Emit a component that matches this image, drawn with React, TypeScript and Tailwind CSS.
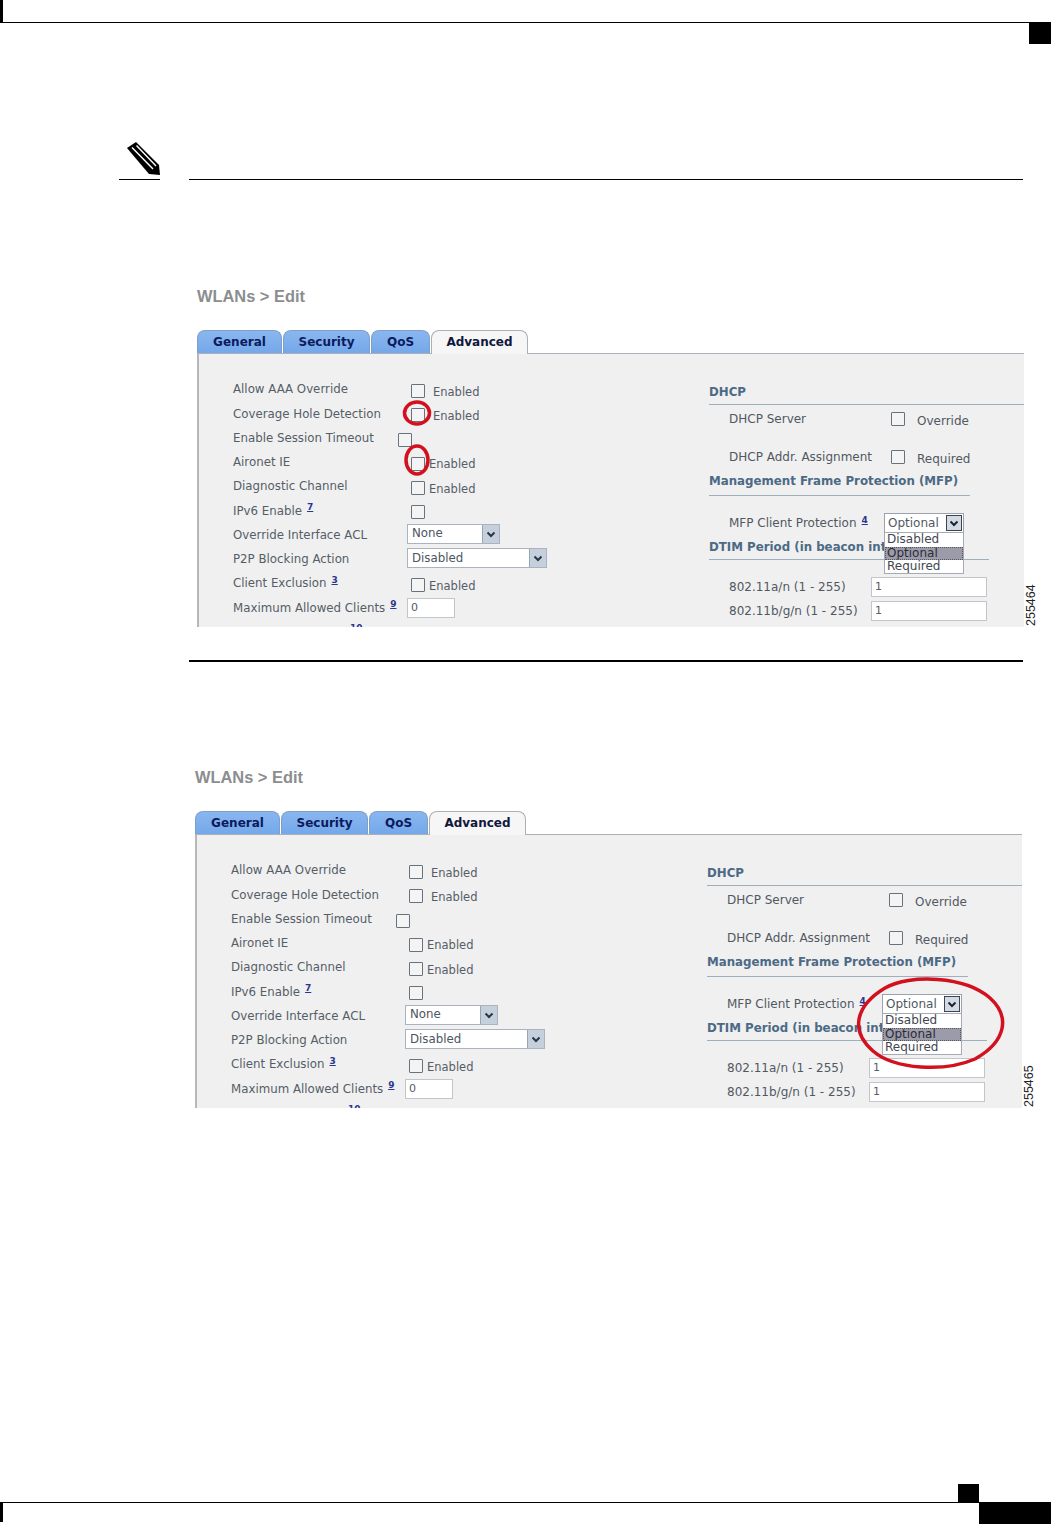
import React from "react";

const Checkbox = () => (
  <span className="block w-[14px] h-[14px] shrink-0 border border-[#66727e] bg-[#f4f4f4] rounded-[1px]" />
);

const Sup = ({ n }: { n: string }) => (
  <sup className="ml-[5px] text-[9px] font-bold underline text-[#2a3690]">{n}</sup>
);

const Select = ({ value, w }: { value: string; w: string }) => (
  <div className={`${w} h-[20px] mt-[-3px] flex items-center justify-between bg-white border border-[#aab3bf] pl-[4px] text-[#4d5560]`}>
    {value}
    <span className="w-[17px] h-[18px] flex items-center justify-center bg-[#c6cfdc] border-l border-[#9aa6b6]">
      <svg width="10" height="7" viewBox="0 0 10 7">
        <path d="M1.5 1.5 L5 5 L8.5 1.5" fill="none" stroke="#27364a" strokeWidth="2" />
      </svg>
    </span>
  </div>
);

const TextBox = ({ value, w }: { value: string; w: string }) => (
  <div className={`${w} h-[20px] flex items-center bg-white border border-[#c2c6ca] pl-[3px] text-[#555c64] text-[11px]`}>
    {value}
  </div>
);

const LeftRow = ({ label, children }: { label: React.ReactNode; children?: React.ReactNode }) => (
  <div className="h-[24.25px] flex items-center shrink-0">
    <div className="w-[174px] shrink-0 text-[#555d67]">{label}</div>
    {children}
  </div>
);

// checkbox plus the small label next to it
const Check = ({ text, gap = "ml-[8px]", pad = "ml-[4px]" }: { text?: string; gap?: string; pad?: string }) => (
  <div className={`flex items-center ${pad}`}>
    <div className="mb-[-2px]">
      <Checkbox />
    </div>
    {text && <span className={`${gap} mt-[4px] text-[11.5px] text-[#555d67]`}>{text}</span>}
  </div>
);

const Heading = ({ children, className }: { children: React.ReactNode; className: string }) => (
  <div className={`flex items-end border-b border-[#9fb0bd] font-bold text-[11.8px] text-[#4c6a85] whitespace-nowrap ${className}`}>
    {children}
  </div>
);

const Tab = ({ label, w }: { label: string; w: string }) => (
  <div className={`${w} h-[23px] mr-[1px] flex items-center justify-center rounded-t-[8px] bg-gradient-to-b from-[#8ab6ef] to-[#74a8ea] border-t border-x border-[#7d9fca] font-bold text-[12px] text-[#0b1b5e]`}>
    {label}
  </div>
);

const Panel = ({ figure, kind }: { figure: string; kind: "boxes" | "menu" }) => (
  <div className="relative w-[827px] h-[342px] font-['DejaVu_Sans',sans-serif] text-[11.8px]">
    <div className="h-[45px] pt-[1px] font-['Liberation_Sans',sans-serif] font-bold text-[16.4px] text-[#8b8d8f] leading-[20px]">
      WLANs &gt; Edit
    </div>
    <div className="flex h-[23px]">
      <Tab label="General" w="w-[85px]" />
      <Tab label="Security" w="w-[87px]" />
      <Tab label="QoS" w="w-[59px]" />
      <div className="w-[97px] h-[24px] pb-[1px] relative z-10 flex items-center justify-center rounded-t-[8px] bg-[#f6f6f6] border-t border-x border-[#a9b0b8] font-bold text-[12px] text-[#10183c]">
        Advanced
      </div>
    </div>
    <div className="h-[274px] flex overflow-hidden bg-[#f0f0f0] border-t border-[#a9b0b8] border-l-2 border-l-[#b5b7ba]">
      <div className="w-[510px] shrink-0 pl-[34px] pt-[24px] flex flex-col">
        <LeftRow label="Allow AAA Override"><Check text="Enabled" /></LeftRow>
        <LeftRow label="Coverage Hole Detection"><Check text="Enabled" /></LeftRow>
        <LeftRow label="Enable Session Timeout"><Check pad="ml-[-9px]" /></LeftRow>
        <LeftRow label="Aironet IE"><Check text="Enabled" gap="ml-[4px]" /></LeftRow>
        <LeftRow label="Diagnostic Channel"><Check text="Enabled" gap="ml-[4px]" /></LeftRow>
        <LeftRow label={<>IPv6 Enable<Sup n="7" /></>}><Check /></LeftRow>
        <LeftRow label="Override Interface ACL"><Select value="None" w="w-[93px]" /></LeftRow>
        <LeftRow label="P2P Blocking Action"><Select value="Disabled" w="w-[140px]" /></LeftRow>
        <LeftRow label={<>Client Exclusion<Sup n="3" /></>}><Check text="Enabled" gap="ml-[4px]" /></LeftRow>
        <LeftRow label={<>Maximum Allowed Clients<Sup n="9" /></>}><TextBox value="0" w="w-[48px]" /></LeftRow>
        <LeftRow label={<span className="block pl-[112px]"><Sup n="10" /></span>}><Check /></LeftRow>
      </div>
      <div className="flex-1 flex flex-col text-[12px] text-[#505862]">
        <Heading className="mt-[26px] h-[25px] pb-[2px]">DHCP</Heading>
        <div className="h-[28px] flex items-center shrink-0 pl-[20px]">
          <span className="w-[162px]">DHCP Server</span>
          <Checkbox />
          <span className="ml-[12px] mt-[4px]">Override</span>
        </div>
        <div className="mt-[10px] h-[28px] flex items-center shrink-0 pl-[20px]">
          <span className="w-[162px]">DHCP Addr. Assignment</span>
          <Checkbox />
          <span className="ml-[12px] mt-[4px]">Required</span>
        </div>
        <Heading className="h-[25px] w-[261px] pb-[4px]">Management Frame Protection (MFP)</Heading>
        <div className="mt-[17px] h-[20px] flex items-center shrink-0 pl-[20px]">
          <span className="w-[155px]">MFP Client Protection<Sup n="4" /></span>
          <div className="w-[80px] h-[20px] flex items-center justify-between bg-white border border-[#9aa3ad] pl-[3px]">
            Optional
            <span className="w-[16px] h-[16px] mr-[1px] flex items-center justify-center bg-[#d3dae4] border border-[#3a4452]">
              <svg width="10" height="7" viewBox="0 0 10 7">
                <path d="M1.5 1.5 L5 5 L8.5 1.5" fill="none" stroke="#1a2433" strokeWidth="2" />
              </svg>
            </span>
          </div>
        </div>
        <Heading className="h-[27px] w-[280px] pb-[2px]">DTIM Period (in beacon intervals)</Heading>
        <div className="mt-[17px] h-[20px] flex items-center shrink-0 pl-[20px]">
          <span className="w-[142px]">802.11a/n (1 - 255)</span>
          <TextBox value="1" w="w-[116px]" />
        </div>
        <div className="mt-[4px] h-[20px] flex items-center shrink-0 pl-[20px]">
          <span className="w-[142px]">802.11b/g/n (1 - 255)</span>
          <TextBox value="1" w="w-[116px]" />
        </div>
      </div>
    </div>

    {/* open list of the select */}
    <div className="absolute left-[687px] top-[247px] w-[80px] h-[42px] bg-white border border-[#a4abb5] text-[12px] text-[#3f4650] leading-[13.5px]">
      <div className="pl-[2px]">Disabled</div>
      <div className="pl-[2px] bg-[#9b9ba9] text-[#2c2c36] outline-1 outline-dotted outline-[#55555f] outline-offset-[-1px]">Optional</div>
      <div className="pl-[2px]">Required</div>
    </div>

    {/* figure number */}
    <div className="absolute left-[827px] top-[298px] h-[44px] w-[14px] flex items-center justify-center [writing-mode:vertical-rl] rotate-180 font-['Liberation_Sans',sans-serif] text-[12.5px] text-[#222]">
      {figure}
    </div>

    {kind === "boxes" ? (
      <svg className="absolute inset-0 pointer-events-none" width="827" height="342" fill="none" stroke="#d2101e" strokeWidth="3.5">
        <ellipse cx="220" cy="128" rx="12.5" ry="11" />
        <ellipse cx="220" cy="175" rx="11" ry="14" />
      </svg>
    ) : (
      <svg className="absolute inset-0 pointer-events-none" width="827" height="342" fill="none" stroke="#d2101e" strokeWidth="3.5">
        <path d="M690 222 C715 208 770 210 795 232 C815 250 812 275 780 293 C750 306 700 304 678 285 C655 265 660 240 690 222 Z" />
      </svg>
    )}
  </div>
);

export default function App() {
  return (
    <div className="relative h-[1524px] w-[1051px] overflow-hidden bg-white flex flex-col">
      <div className="h-[23px] shrink-0 border-b border-black">
        <div className="w-[3px] h-full bg-black" />
      </div>
      <div className="h-[21px] shrink-0 flex justify-end">
        <div className="w-[22px] h-full bg-black" />
      </div>

      {/* note icon and rule */}
      <div className="mt-[135px] h-[1px] shrink-0 relative">
        <div className="absolute left-[119px] w-[41px] h-[1px] bg-black" />
        <div className="absolute left-[189px] w-[834px] h-[1px] bg-black" />
        <svg className="absolute left-[126px] top-[-38px]" width="35" height="36" viewBox="0 0 35 36">
          <path d="M10 1 L1 7 L6 13 L23 33 L34 34 L33 24 L15 6 Z" fill="#000" />
          <path d="M6 6.5 L27 28 M10.5 4.5 L30 25" stroke="#fff" strokeWidth="1.4" fill="none" />
        </svg>
      </div>

      <div className="ml-[197px] mt-[105px] shrink-0">
        <Panel figure="255464" kind="boxes" />
      </div>
      <div className="ml-[189px] mt-[33px] w-[834px] h-[2px] shrink-0 bg-black" />
      <div className="ml-[195px] mt-[104px] shrink-0">
        <Panel figure="255465" kind="menu" />
      </div>

      <div className="mt-auto h-[18px] shrink-0 flex justify-end pr-[72px]">
        <div className="w-[21px] h-full bg-black" />
      </div>
      <div className="h-[22px] shrink-0 flex border-t border-black">
        <div className="w-[3px] h-[19px] bg-black" />
        <div className="ml-auto w-[72px] h-[22px] mt-[-1px] bg-black" />
      </div>
    </div>
  );
}
